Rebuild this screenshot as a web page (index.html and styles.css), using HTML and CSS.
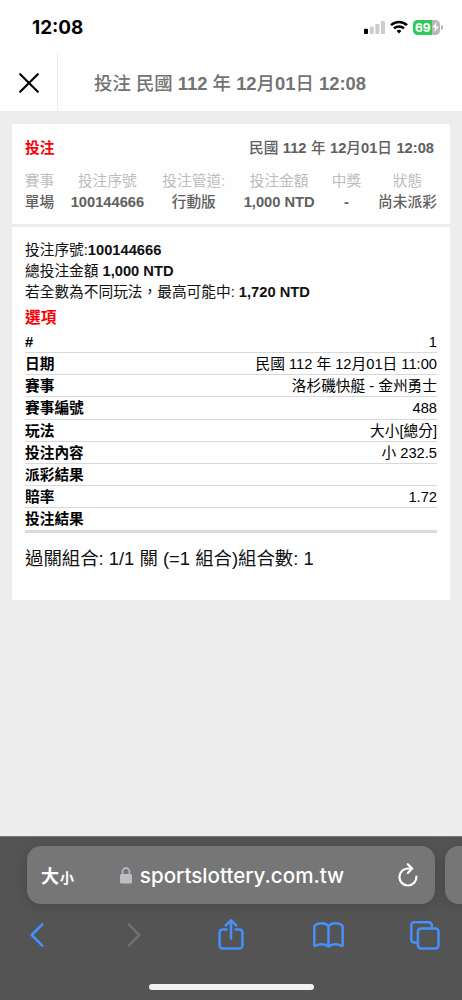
FILE: index.html
```html
<!DOCTYPE html>
<html lang="zh-Hant">
<head>
    <meta charset="UTF-8">
    <meta name="viewport" content="width=device-width, initial-scale=1.0">
    <title>投注</title>
    <link rel="stylesheet" href="styles.css">
</head>
<body>
    <!-- Status bar -->
    <div class="status-bar">
        <span class="clock">12:08</span>
        <div class="status-icons">
            <svg class="signal" width="21" height="13" viewBox="0 0 21 13">
                <rect x="0" y="7.8" width="4" height="5.2" rx="1" fill="#000"/>
                <rect x="5.8" y="5.6" width="4" height="7.4" rx="1" fill="#ccc"/>
                <rect x="11.4" y="3" width="4" height="10" rx="1" fill="#ccc"/>
                <rect x="17" y="0" width="4" height="13" rx="1" fill="#ccc"/>
            </svg>
            <svg class="wifi" width="18" height="14" viewBox="0 0 18 14" fill="none" stroke="#000" stroke-width="2.5">
                <path d="M1 5.1a11.6 11.6 0 0 1 16 0"/>
                <path d="M4 8.4a7.2 7.2 0 0 1 10 0"/>
                <path d="M6.6 10.9a3.6 3.6 0 0 1 4.8 0L9 13.4z" fill="#000" stroke="none"/>
            </svg>
            <div class="battery">
                <span>69</span>
                <svg width="7" height="10" viewBox="0 0 7 11"><path d="M4.6 0L0 6.1h3L2.3 11 7 4.7H4z" fill="#fff"/></svg>
            </div>
            <div class="battery-tip"></div>
        </div>
    </div>

    <!-- Page header -->
    <header class="page-header">
        <div class="close">
            <svg width="20" height="20" viewBox="0 0 20 20" stroke="#000" stroke-width="2.1" stroke-linecap="round"><path d="M1.2 1.2l17.6 17.6M18.8 1.2L1.2 18.8"/></svg>
        </div>
        <h1 class="title"><span class="zh">投注</span> <span class="zh">民國</span> 112 <span class="zh">年</span> 12<span class="zh">月</span>01<span class="zh">日</span> 12:08</h1>
    </header>

    <main class="content">
        <!-- Bet summary -->
        <section class="card summary">
            <div class="summary-top">
                <span class="red zh">投注</span>
                <span class="date"><span class="zh">民國</span> 112 <span class="zh">年</span> 12<span class="zh">月</span>01<span class="zh">日</span> 12:08</span>
            </div>
            <div class="summary-grid">
                <span class="label">賽事</span>
                <span class="label">投注序號</span>
                <span class="label">投注管道:</span>
                <span class="label">投注金額</span>
                <span class="label">中獎</span>
                <span class="label">狀態</span>
                <span class="zh">單場</span>
                <span>100144666</span>
                <span class="zh">行動版</span>
                <span>1,000 NTD</span>
                <span>-</span>
                <span class="zh">尚未派彩</span>
            </div>
        </section>

        <!-- Bet details -->
        <section class="card details">
            <p>投注序號:<b>100144666</b></p>
            <p>總投注金額 <b>1,000 NTD</b></p>
            <p>若全數為不同玩法，最高可能中: <b>1,720 NTD</b></p>
            <h2 class="red">選項</h2>
            <dl class="options">
                <div class="row"><dt>#</dt><dd>1</dd></div>
                <div class="row"><dt>日期</dt><dd>民國 112 年 12月01日 11:00</dd></div>
                <div class="row"><dt>賽事</dt><dd>洛杉磯快艇 - 金州勇士</dd></div>
                <div class="row"><dt>賽事編號</dt><dd>488</dd></div>
                <div class="row"><dt>玩法</dt><dd>大小[總分]</dd></div>
                <div class="row"><dt>投注內容</dt><dd>小 232.5</dd></div>
                <div class="row"><dt>派彩結果</dt><dd></dd></div>
                <div class="row"><dt>賠率</dt><dd>1.72</dd></div>
                <div class="row"><dt>投注結果</dt><dd></dd></div>
            </dl>
            <p class="combo">過關組合: 1/1 關 (=1 組合)組合數: 1</p>
        </section>
    </main>

    <!-- Browser toolbar -->
    <footer class="browser">
        <div class="tabs">
            <div class="address">
                <span class="text-size">大<small>小</small></span>
                <span class="url">
                    <svg width="12" height="17" viewBox="0 0 12 17"><rect y="7" width="12" height="9.6" rx="1.6" fill="#bfbdc6"/><path d="M2.5 8V4.6a3.5 3.5 0 0 1 7 0V8" fill="none" stroke="#bfbdc6" stroke-width="1.6"/></svg>
                    sportslottery.com.tw
                </span>
                <svg class="reload" width="20" height="24" viewBox="0 0 20 24" fill="none" stroke="#fff" stroke-width="2.2" stroke-linecap="round" stroke-linejoin="round"><path d="M18.4 13.6A8.500 8.500 0 1 1 10 5.500h4"/><path d="M9.800 1.200l4.300 4.300-4.300 4.400"/></svg>
            </div>
            <div class="next-tab"></div>
        </div>
        <div class="tools">
            <svg width="14" height="24" viewBox="0 0 14 24"><path d="M12.3 1.4L1.7 12l10.6 10.6"/></svg>
            <svg class="disabled" width="14" height="24" viewBox="0 0 14 24"><path d="M1.7 1.4L12.3 12 1.7 22.6"/></svg>
            <svg width="26" height="32" viewBox="0 0 26 32"><path d="M8.4 10.500H4.600a3 3 0 0 0-3 3v12.900a3 3 0 0 0 3 3h16.800a3 3 0 0 0 3-3V13.500a3 3 0 0 0-3-3h-3.800M13 19.500V2M7.700 6.500L13 1.300 18.300 6.500"/></svg>
            <svg width="31" height="26" viewBox="0 0 31 26"><path d="M15.500 4.200C12.500.6 5.500.4 2 3.200a1.500 1.500 0 0 0-.7 1.300v18.400c0 1 .7 1.400 1.500.9 3.600-2.200 9-2.200 12.700.8 3.700-3 9.100-3 12.700-.8.8.5 1.500.1 1.500-.9V4.500a1.500 1.500 0 0 0-.7-1.300C25.500.4 18.500.6 15.500 4.200zV24.300"/></svg>
            <svg width="30" height="29" viewBox="0 0 30 29"><path d="M7.800 21.600H4.300a3 3 0 0 1-3-3V4.300a3 3 0 0 1 3-3H18.800a3 3 0 0 1 3 3v3.200"/><rect x="7.900" y="7.500" width="20.600" height="20" rx="3"/></svg>
        </div>
        <div class="home-indicator"></div>
    </footer>
</body>
</html>
```
FILE: styles.css
```css
* {
    box-sizing: border-box;
}

body {
    margin: 0;
    width: 462px;
    height: 1000px;
    display: flex;
    flex-direction: column;
    background-color: #fefefe;
    color: #111;
    font-family: "Liberation Sans", "Noto Sans CJK TC", sans-serif;
    font-size: 14.7px;
    overflow: hidden;
}

h1, h2, p, dl, dd {
    margin: 0;
}

svg {
    flex: none;
    display: block;
}

.red {
    color: #f80008;
}

.zh {
    font-weight: 500;
}

/* Status bar */
.status-bar {
    height: 54px;
    padding: 0 19px 0 32px;
    display: flex;
    align-items: center;
    justify-content: space-between;
}

.clock {
    font-family: Inter, sans-serif;
    font-size: 18.9px;
    font-weight: 700;
    color: #000;
}

.status-icons {
    display: flex;
    align-items: center;
}

.wifi {
    margin: 0 5px 0 5px;
}

.battery {
    width: 27px;
    height: 15px;
    padding: 0 1px 0 2px;
    border-radius: 4.5px;
    display: flex;
    align-items: center;
    justify-content: space-between;
    background: linear-gradient(90deg, #34c759 69%, #b9b9b9 69%);
    color: #fff;
    font-family: Inter, sans-serif;
    font-size: 12px;
    font-weight: 700;
}

.battery-tip {
    width: 2px;
    height: 5px;
    margin-left: 1px;
    border-radius: 0 2px 2px 0;
    background-color: #b9b9b9;
}

/* Page header */
.page-header {
    height: 57px;
    display: flex;
}

.close {
    width: 58px;
    border-right: 1px solid #ececec;
    display: flex;
    align-items: center;
    justify-content: center;
}

.title {
    padding-left: 36px;
    font-size: 18.4px;
    font-weight: 700;
    line-height: 60px;
    color: #737373;
    white-space: nowrap;
}

/* Cards */
.content {
    flex: 1;
    padding: 13px 12px 0;
    background-color: #ededed;
}

.card {
    padding: 0 13px;
    background-color: #fefefe;
}

.summary {
    height: 100px;
    margin-bottom: 3px;
    padding-top: 14px;
    color: #606060;
    font-weight: 700;
}

.summary-top {
    display: flex;
    justify-content: space-between;
    padding-right: 3px;
    line-height: 21px;
}

.summary-top .red {
    font-weight: 700;
}

.date {
    word-spacing: 0.3px;
}

.summary-grid {
    display: grid;
    grid-template-columns: 29px 74px 66px 72px 30px 59px;
    justify-content: space-between;
    justify-items: center;
    margin-top: 12px;
    line-height: 21px;
    white-space: nowrap;
}

.label {
    color: #bdbdbd;
    font-weight: 400;
}

.details {
    height: 373px;
    padding-top: 13px;
}

.details p {
    line-height: 21px;
    white-space: nowrap;
}

.details h2 {
    padding-top: 1px;
    font-size: 15.7px;
    line-height: 27px;
}

.options {
    border-bottom: 3px solid #dadada;
    color: #000;
}

.row {
    height: 22.15px;
    display: flex;
    justify-content: space-between;
    border-bottom: 1px solid #d8d8d8;
    line-height: 22px;
}

.row:last-child {
    border-bottom: none;
}

.row dt {
    font-weight: 700;
}

.details .combo {
    margin-top: 13px;
    font-size: 18.4px;
    line-height: 26px;
}

/* Browser toolbar */
.browser {
    height: 164px;
    padding-top: 9px;
    border-top: 1px solid #777;
    background-color: #545454;
}

.tabs {
    display: flex;
    gap: 10px;
    padding-left: 27px;
}

.address,
.next-tab {
    height: 58px;
    border-radius: 14px;
    background-color: #767676;
    box-shadow: 0 2px 14px rgba(0, 0, 0, 0.16);
}

.address {
    width: 408px;
    flex: none;
    padding: 0 17px 0 14px;
    display: flex;
    align-items: center;
    justify-content: space-between;
    color: #fff;
}

.next-tab {
    width: 17px;
    border-radius: 14px 0 0 14px;
}

.text-size {
    font-size: 18px;
    font-weight: 700;
}

.text-size small {
    margin-left: 1px;
    font-size: 14px;
}

.url {
    display: flex;
    align-items: center;
    gap: 8px;
    margin-right: 8px;
    font-family: Inter, sans-serif;
    font-size: 20.6px;
    font-weight: 500;
}

.tools {
    height: 62px;
    display: grid;
    grid-template-columns: repeat(5, 97px);
    align-items: center;
    justify-content: center;
    justify-items: center;
    fill: none;
    stroke: #4590fb;
    stroke-width: 2.5;
    stroke-linecap: round;
    stroke-linejoin: round;
}

.disabled {
    stroke: #707070;
}

.home-indicator {
    width: 165px;
    height: 6px;
    margin: 18px auto 0;
    border-radius: 3px;
    background-color: #f2f2f2;
}
```
